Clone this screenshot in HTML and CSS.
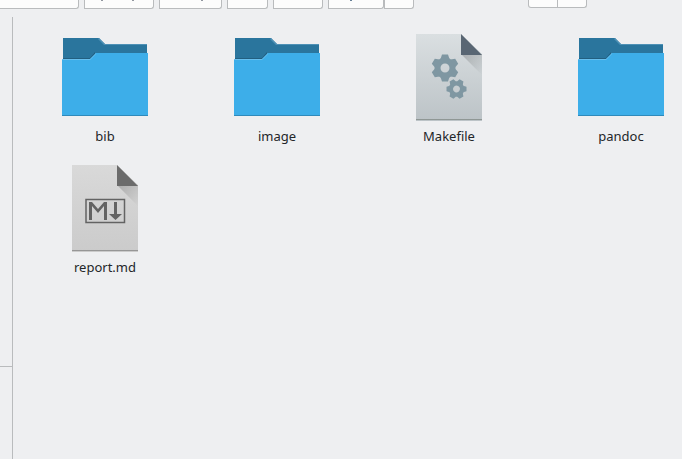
FILE: index.html
```html
<!DOCTYPE html>
<html lang="en">
<head>
<meta charset="utf-8">
<title>Files</title>
<link rel="stylesheet" href="styles.css">
</head>
<body>
<svg class="defs" aria-hidden="true">
  <defs>
    <linearGradient id="gray-blue" x1="0" y1="0" x2="0" y2="1"><stop offset="0" stop-color="#dadfe1"/><stop offset="1" stop-color="#bcc3c7"/></linearGradient>
    <linearGradient id="gray" x1="0" y1="0" x2="0" y2="1"><stop offset="0" stop-color="#d9d9d9"/><stop offset="1" stop-color="#cbcbcb"/></linearGradient>
    <linearGradient id="shade" x1="0" y1="0" x2="1" y2="1"><stop offset="0" stop-color="#000" stop-opacity=".2"/><stop offset="1" stop-color="#000" stop-opacity="0"/></linearGradient>
    <symbol id="folder" viewBox="0 0 88 88">
      <path fill="#2a759d" d="M2 4H38L44 10H86V32H2Z"/>
      <path fill="#4e91b6" d="M38 4L44 10H86V11H43L37 5Z"/>
      <path fill="#235f80" d="M2 24H29L34 18V24L29 25H2Z"/>
      <path fill="#3daee9" d="M1 25H29L35 19H87V82H1Z"/>
      <path fill="#67bfee" d="M1 25H29L35 19V20L29 26H1Z"/>
      <path fill="#2f8abb" d="M1 81H87V82H1Z"/>
    </symbol>
    <g id="gear">
      <circle r="7.5" fill="none" stroke="#7f97a2" stroke-width="6"/>
      <g fill="#7f97a2">
        <path id="cogs" d="M-4.500 -9L-3 -13.500H3L4.500 -9ZM-4.500 9L-3 13.500H3L4.500 9Z"/>
        <use href="#cogs" transform="rotate(60)"/>
        <use href="#cogs" transform="rotate(120)"/>
      </g>
    </g>
  </defs>
</svg>
<header class="toolbar">
  <nav class="path" aria-label="Location">
    <button class="crumb first" aria-label="Root folder"></button>
    <button class="crumb second" aria-label="Parent folder"><svg width="68" height="3"><path fill="#9297a0" d="M16 0h2v1h-2zM47 0h2v1h-2z"/></svg></button>
    <button class="crumb third" aria-label="Folder"><svg width="60" height="3"><path fill="#9297a0" d="M41 0h2v1h-2z"/></svg></button>
    <button class="crumb fourth" aria-label="Subfolder"></button>
    <button class="crumb fifth" aria-label="Current folder"></button>
    <div class="pair">
      <button class="crumb sixth" aria-label="Branch"><svg width="54" height="3"><path fill="#667f96" d="M21 0h2v1h-2z"/></svg></button>
      <button class="crumb last" aria-label="More"></button>
    </div>
  </nav>
  <div class="views">
    <button class="view" aria-label="Icon view"></button>
    <button class="view" aria-label="List view"></button>
  </div>
</header>
<div class="workspace">
  <aside class="sidebar"><div class="places"></div><div class="details"></div></aside>
  <main class="files">
    <a class="file" href="#bib"><svg class="icon" aria-hidden="true"><use href="#folder"/></svg><span>bib</span></a>
    <a class="file" href="#image"><svg class="icon" aria-hidden="true"><use href="#folder"/></svg><span>image</span></a>
    <a class="file" href="#makefile"><svg class="icon" viewBox="0 0 88 88" aria-hidden="true">
      <path fill="url(#gray-blue)" d="M11 0H56L77 20V87H11Z"/>
      <path fill="url(#shade)" d="M56 20H77V41Z"/>
      <path fill="#596673" d="M56 0L77 21H56Z"/>
      <path fill="#8f9795" d="M11 85H77V86H11Z"/>
      <use href="#gear" transform="translate(40 34)"/>
      <use href="#gear" transform="translate(51.500 55) rotate(30) scale(.74)"/>
    </svg><span>Makefile</span></a>
    <a class="file" href="#pandoc"><svg class="icon" aria-hidden="true"><use href="#folder"/></svg><span>pandoc</span></a>
    <a class="file" href="#report"><svg class="icon" viewBox="0 0 88 88" aria-hidden="true">
      <path fill="url(#gray)" d="M11 0H56L77 20V87H11Z"/>
      <path fill="url(#shade)" d="M56 20H77V41Z"/>
      <path fill="#6b6b6b" d="M56 0L77 21H56Z"/>
      <path fill="#969696" d="M11 85H77V86H11Z"/>
      <path fill="none" stroke="#636363" stroke-width="1.500" d="M25 34.500H63.500V57.500H25Z"/>
      <path fill="#636363" d="M28 37H31L37 44L43 37H46V55H43V41L37 48L31 41V55H28Z"/>
      <path fill="#636363" d="M53 37H56V49H61L54.500 55L48 49H53Z"/>
    </svg><span>report.md</span></a>
  </main>
</div>
</body>
</html>
```
FILE: styles.css
```css
* { box-sizing: border-box; }
body {
  margin: 0;
  min-height: 100vh;
  display: flex;
  flex-direction: column;
  background: #eeeff1;
  color: #232629;
  font: 13px/18px "Noto Sans", sans-serif;
}
.defs { position: absolute; width: 0; height: 0; }
button { padding: 0; background: #fcfcfc; border: 1px solid #b9bbbd; border-top: 0; }
button svg { display: block; }
.toolbar { display: flex; align-items: flex-start; height: 17px; }
.path { display: flex; gap: 5px; margin-right: 114px; }
.pair { display: flex; }
.crumb { height: 9px; border-radius: 0 0 3px 0; display: flex; align-items: flex-start; }
.first { width: 79px; border-left: 0; }
.second { width: 70px; }
.third { width: 63px; }
.fourth { width: 41px; }
.fifth { width: 50px; }
.sixth { width: 56px; }
.last { width: 30px; }
.views { display: flex; }
.view { width: 30px; height: 8px; border-radius: 0 0 0 3px; }
.view + .view { border-left: 0; width: 29px; border-radius: 0 0 3px 0; }
.workspace { flex: 1; display: flex; }
.sidebar { width: 13px; border-right: 1px solid #b9bbbd; display: flex; flex-direction: column; }
.places { flex: 350; border-bottom: 1px solid #b9bbbd; }
.details { flex: 92; }
.files {
  flex: 1;
  padding: 17px 0 0 6px;
  display: grid;
  grid-template-columns: repeat(auto-fill, 172px);
  grid-auto-rows: 131px;
  margin-right: -26px;
}
.file { display: flex; flex-direction: column; align-items: center; gap: 5px; color: inherit; text-decoration: none; }
.icon { width: 88px; height: 88px; }
```
